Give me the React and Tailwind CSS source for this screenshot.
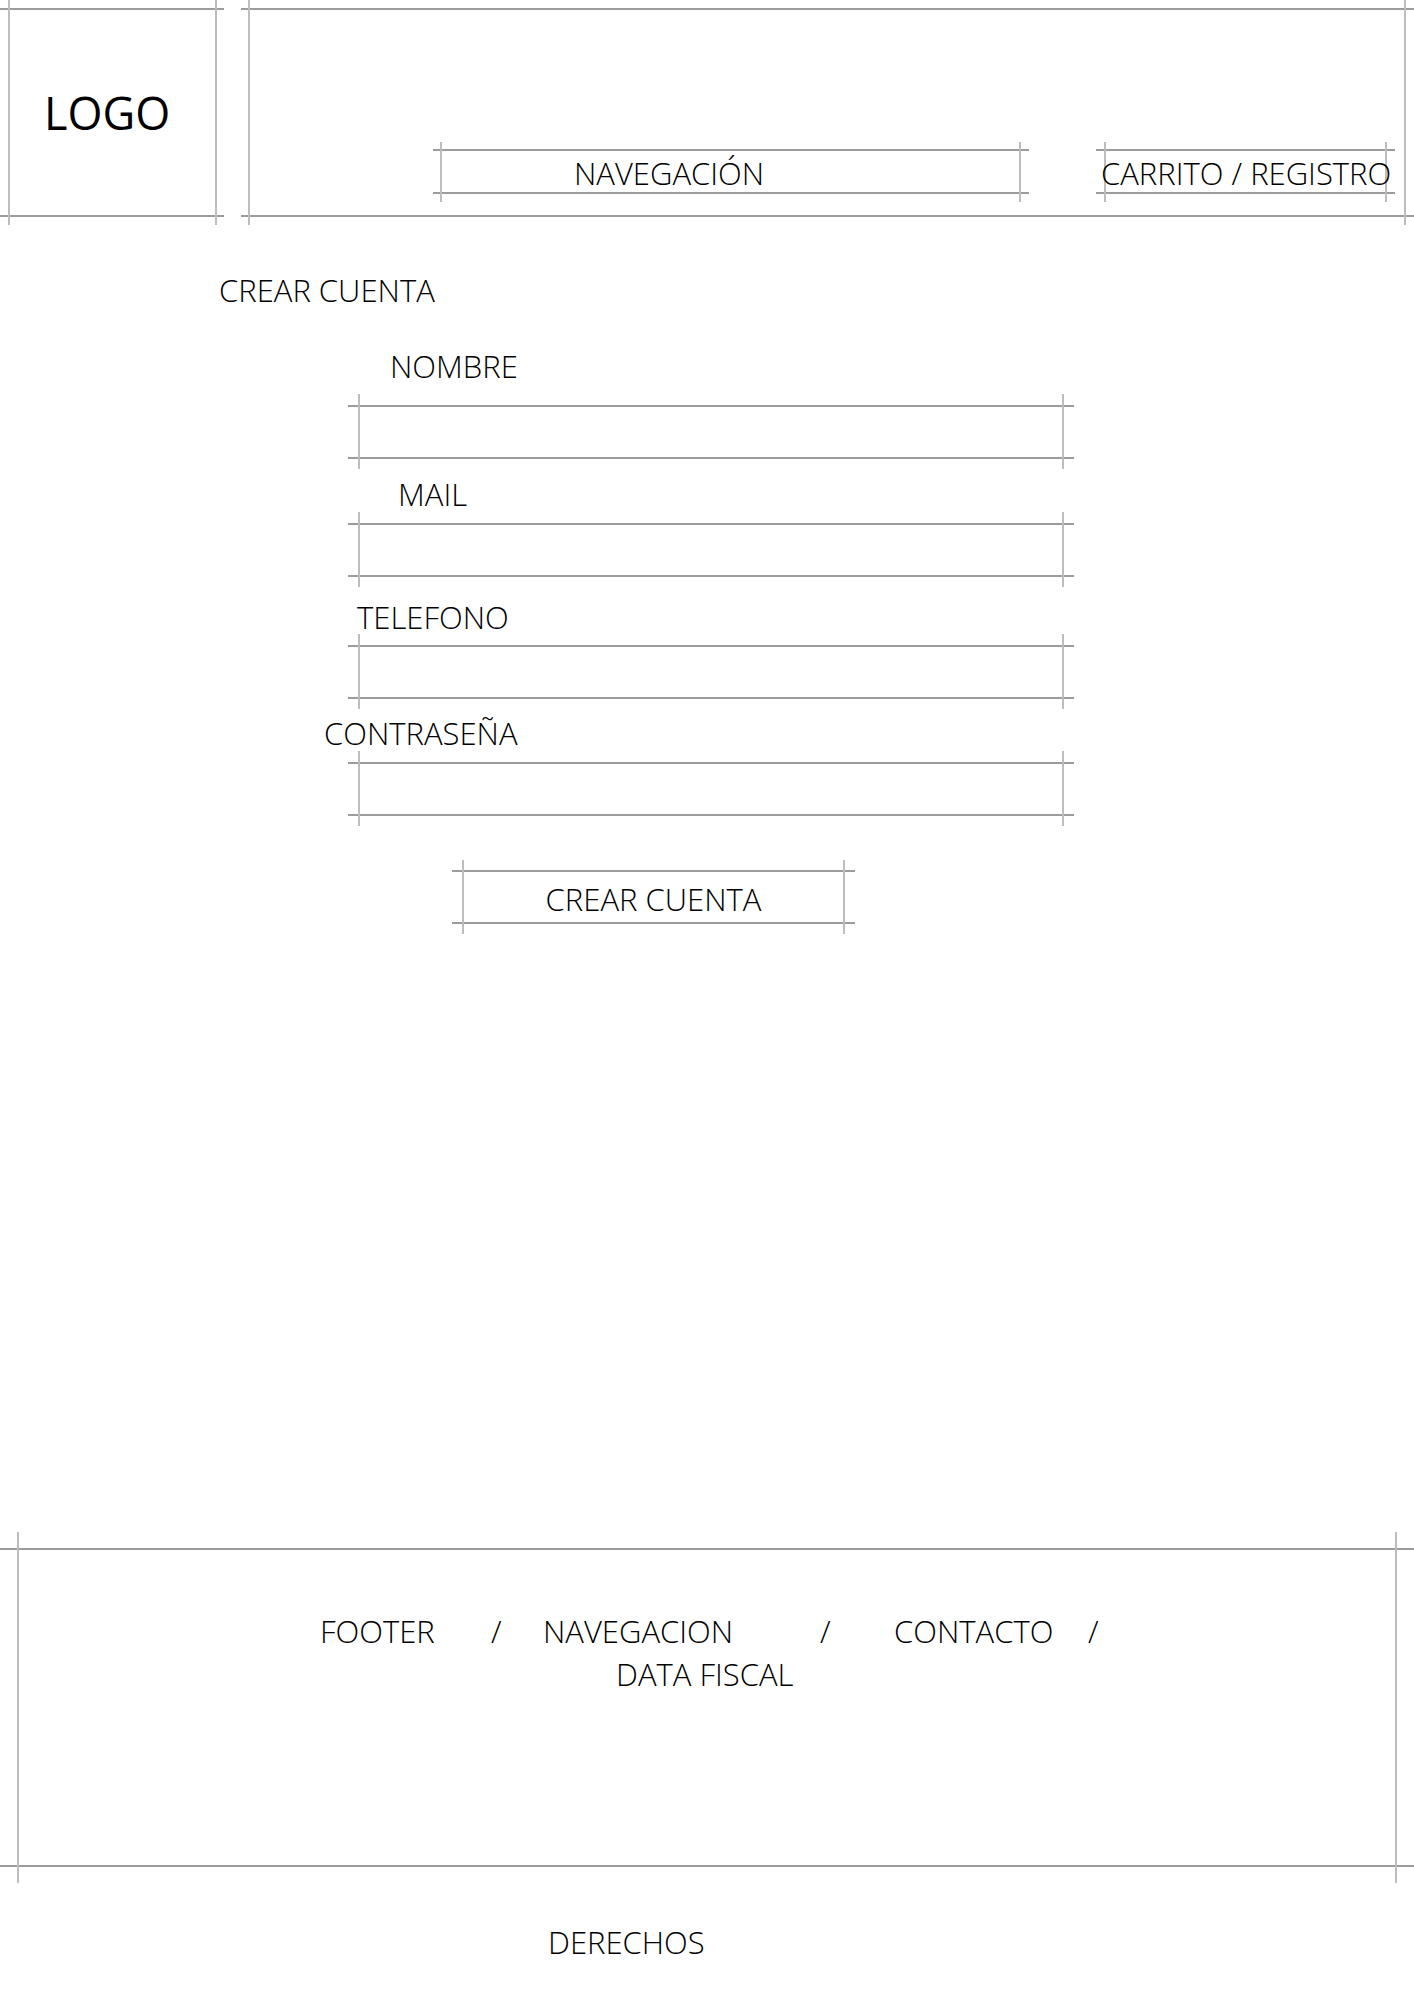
import React from 'react'

// wireframe box: two horizontal + two vertical guide lines that cross and run past each other
function Frame({ className = '', top, bottom, left, right, children }) {
  return (
    <div className={`relative ${className}`}>
      <div className={`absolute left-0 right-0 h-[2px] bg-[#9c9c9c] ${top}`} />
      <div className={`absolute left-0 right-0 h-[2px] bg-[#9c9c9c] ${bottom}`} />
      <div className={`absolute top-0 bottom-0 w-[2px] bg-[#bdbdbd] ${left}`} />
      <div className={`absolute top-0 bottom-0 w-[2px] bg-[#bdbdbd] ${right}`} />
      <div className="relative">{children}</div>
    </div>
  )
}

function Field({ label, labelClass, inputClass }) {
  return (
    <>
      <div className={`text-[31px] leading-[30px] whitespace-nowrap ${labelClass}`}>{label}</div>
      <Frame
        className={`w-[726px] h-[75px] ml-[348px] ${inputClass}`}
        top="top-[11px]" bottom="bottom-[10px]" left="left-[10px]" right="right-[10px]"
      />
    </>
  )
}

export default function App() {
  return (
    <div className="w-[1414px] h-[2000px] bg-white text-black font-['Open_Sans',sans-serif] font-light overflow-hidden">
      {/* Header */}
      <div className="flex h-[225px]">
        <Frame className="w-[224px] h-[225px]" top="top-[8px]" bottom="bottom-[8px]" left="left-[8px]" right="right-[7px]">
          <div className="pt-[90px] pl-[44px] text-[45px] leading-[46px] font-normal">LOGO</div>
        </Frame>
        <Frame className="ml-[17px] flex-1 h-[225px]" top="top-[8px]" bottom="bottom-[8px]" left="left-[7px]" right="right-[8px]">
          <div className="flex pt-[142px]">
            <Frame className="ml-[192px] w-[596px] h-[60px]" top="top-[7px]" bottom="bottom-[8px]" left="left-[7px]" right="right-[8px]">
              <div className="pt-[16px] pl-[141px] text-[31px] leading-[30px] whitespace-nowrap">NAVEGACIÓN</div>
            </Frame>
            <Frame className="ml-[67px] w-[299px] h-[60px]" top="top-[7px]" bottom="bottom-[8px]" left="left-[8px]" right="right-[8px]">
              <div className="pt-[16px] pl-[5px] text-[31px] leading-[30px] whitespace-nowrap">CARRITO / REGISTRO</div>
            </Frame>
          </div>
        </Frame>
      </div>

      {/* Registro */}
      <div className="mt-[50px] pl-[219px] text-[31px] leading-[30px]">CREAR CUENTA</div>

      <Field label="NOMBRE" labelClass="mt-[46px] pl-[390px]" inputClass="mt-[13px]" />
      <Field label="MAIL" labelClass="mt-[10px] pl-[398px]" inputClass="mt-[3px]" />
      <Field label="TELEFONO" labelClass="mt-[15px] pl-[357px]" inputClass="mt-[2px]" />
      <Field label="CONTRASEÑA" labelClass="mt-[9px] pl-[324px]" inputClass="mt-[3px]" />

      <Frame className="mt-[34px] ml-[452px] w-[403px] h-[74px]" top="top-[10px]" bottom="bottom-[10px]" left="left-[10px]" right="right-[10px]">
        <div className="pt-[24px] text-center text-[31px] leading-[30px]">CREAR CUENTA</div>
      </Frame>

      {/* Footer */}
      <Frame className="mt-[598px] w-[1414px] h-[351px]" top="top-[16px]" bottom="bottom-[16px]" left="left-[17px]" right="right-[17px]">
        <div className="pt-[84px] text-[31px] leading-[30px]">
          <div className="flex pl-[320px] whitespace-nowrap">
            <span className="w-[171px]">FOOTER</span>
            <span className="w-[52px]">/</span>
            <span className="w-[277px]">NAVEGACION</span>
            <span className="w-[74px]">/</span>
            <span className="w-[194px]">CONTACTO</span>
            <span>/</span>
          </div>
          <div className="mt-[13px] pl-[616px]">DATA FISCAL</div>
        </div>
      </Frame>

      <div className="mt-[44px] pl-[548px] text-[31px] leading-[30px]">DERECHOS</div>
    </div>
  )
}
